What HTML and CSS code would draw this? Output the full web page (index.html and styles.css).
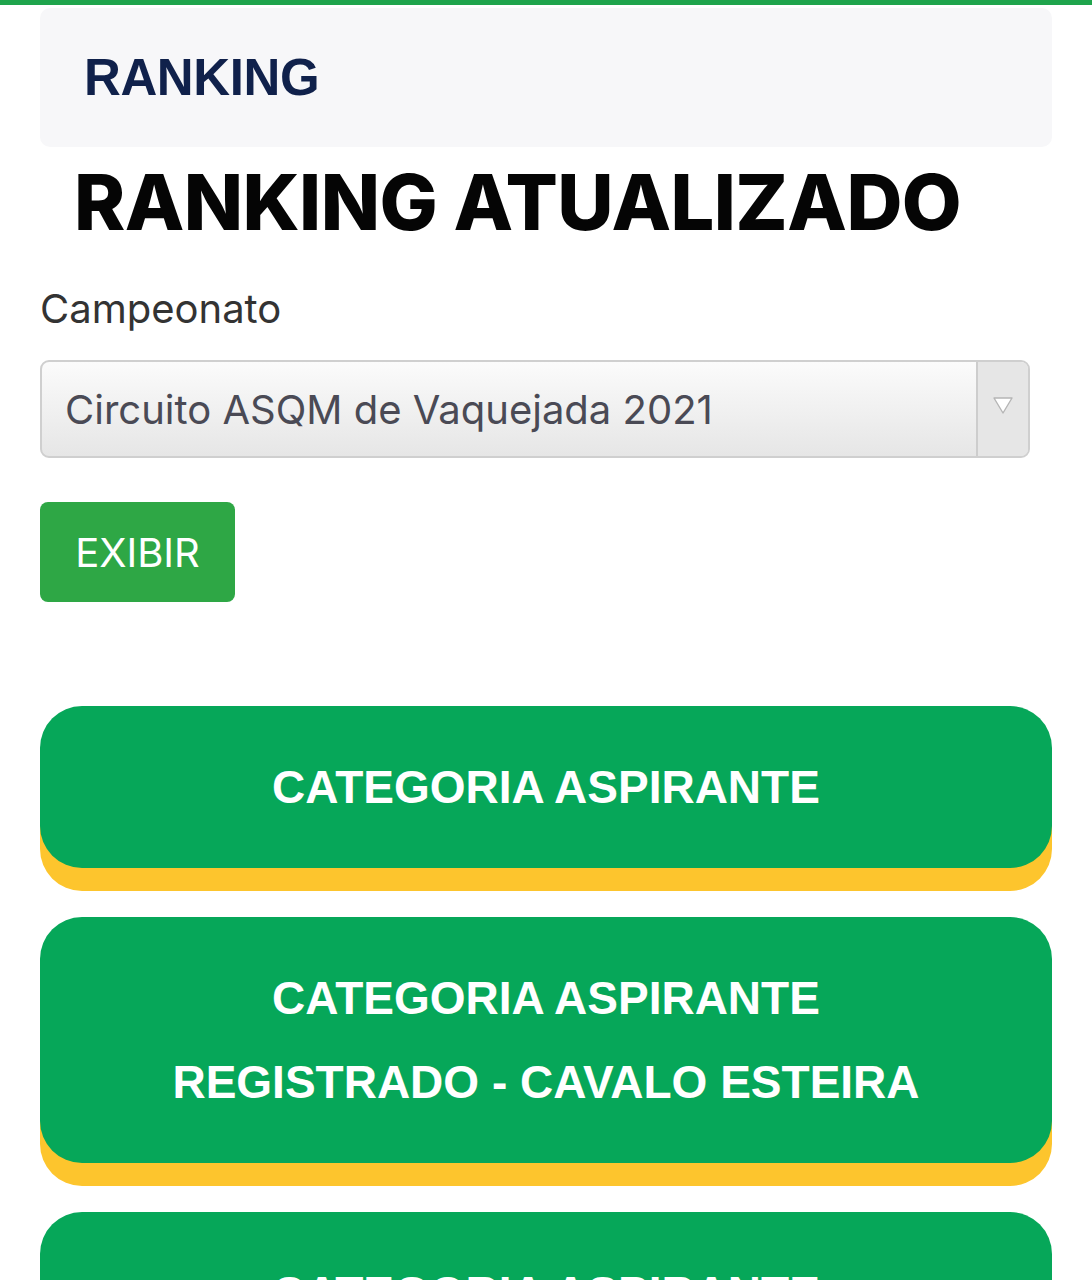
FILE: index.html
```html
<!DOCTYPE html>
<html lang="pt-BR">

<head>
    <meta charset="UTF-8">
    <meta name="viewport" content="width=device-width, initial-scale=1.0">
    <title>Ranking</title>
    <link rel="stylesheet" href="styles.css">
</head>

<body>
    <div class="topbar"></div>

    <div class="page">
        <!-- cabeçalho -->
        <div class="header-card">
            <h1 class="header-title">RANKING</h1>
        </div>

        <h2 class="main-title">RANKING ATUALIZADO</h2>

        <!-- filtro -->
        <form class="filter">
            <label class="filter-label" for="campeonato">Campeonato</label>
            <div class="select">
                <span class="select-text">Circuito ASQM de Vaquejada 2021</span>
                <span class="select-arrow">
                    <svg width="22" height="20" viewBox="0 0 22 20">
                        <path d="M2 3 L20 3 L11 18 Z" fill="#ffffff" stroke="#b5b5b5" stroke-width="1.4" stroke-linejoin="round" />
                    </svg>
                </span>
            </div>
            <button type="button" class="btn-exibir">EXIBIR</button>
        </form>

        <!-- categorias -->
        <div class="categories">
            <a href="#" class="category">CATEGORIA ASPIRANTE</a>
            <a href="#" class="category">CATEGORIA ASPIRANTE<br>REGISTRADO - CAVALO ESTEIRA</a>
            <a href="#" class="category">CATEGORIA ASPIRANTE</a>
        </div>
    </div>
</body>

</html>
```

FILE: styles.css
```css
body {
    margin: 0;
    background: #ffffff;
    font-family: "Liberation Sans", Arial, sans-serif;
    overflow: hidden;
}

/* ▼linha verde do topo */
.topbar {
    height: 5px;
    background: #1fa44c;
}

.page {
    padding: 3px 40px 0 40px;
}

/* ▼cabeçalho */
.header-card {
    background: #f7f7f9;
    border-radius: 10px;
    height: 139px;
    display: flex;
    align-items: center;
    padding-left: 44px;
}

.header-title {
    margin: 0;
    font-size: 51px;
    font-weight: 700;
    color: #10214b;
    letter-spacing: -0.4px;
}

/* ▼título principal */
.main-title {
    margin: 5px 0 0 34px;
    font-family: "Inter", "Liberation Sans", sans-serif;
    font-size: 77.5px;
    font-weight: 800;
    line-height: 100px;
    color: #050505;
    letter-spacing: -0.6px;
}

/* ▼filtro */
.filter {
    margin-top: 32px;
}

.filter-label {
    display: block;
    font-family: "Inter", "Liberation Sans", sans-serif;
    font-size: 40px;
    color: #333333;
    line-height: 50px;
}

.select {
    margin-top: 26px;
    width: 990px;
    height: 98px;
    box-sizing: border-box;
    border: 2px solid #cfcfcf;
    border-radius: 9px;
    background: linear-gradient(#fbfbfb, #e6e6e6);
    display: flex;
    align-items: center;
    overflow: hidden;
}

.select-text {
    flex: 1;
    padding-left: 23px;
    font-family: "Inter", "Liberation Sans", sans-serif;
    font-size: 40px;
    color: #4a4a55;
}

.select-arrow {
    width: 52px;
    height: 100%;
    border-left: 2px solid #cdcdcd;
    background: #e6e6e6;
    display: flex;
    align-items: center;
    justify-content: center;
    padding-bottom: 8px;
    box-sizing: border-box;
}

.btn-exibir {
    display: block;
    margin-top: 44px;
    width: 195px;
    height: 100px;
    border: none;
    border-radius: 8px;
    background: #2ea745;
    color: #ffffff;
    font-family: "Inter", "Liberation Sans", sans-serif;
    font-size: 40px;
}

/* ▼categorias */
.categories {
    margin-top: 104px;
    display: flex;
    flex-direction: column;
    gap: 49px;
}

.category {
    display: block;
    background: #06a759;
    border-radius: 42px;
    box-shadow: 0 23px 0 #fdc52d;
    padding: 39px 20px;
    text-align: center;
    text-decoration: none;
    color: #ffffff;
    font-size: 46px;
    font-weight: 700;
    line-height: 84px;
}
```
